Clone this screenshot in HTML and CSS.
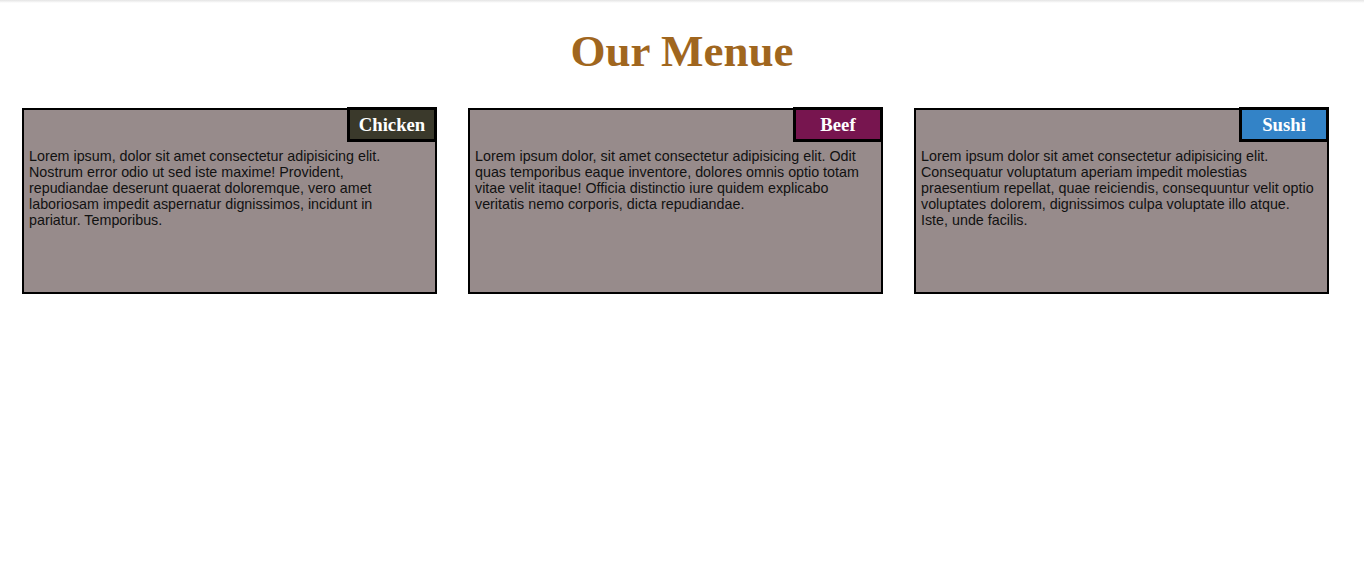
FILE: index.html
```html
<!DOCTYPE html>
<html lang="en">
<head>
<meta charset="utf-8">
<title>Our Menue</title>
<link rel="stylesheet" href="styles.css">
</head>
<body>
<div class="topbar"></div>
<h1 class="title">Our Menue</h1>
<div class="cards">
  <div class="card">
    <h3 class="badge badge-chicken">Chicken</h3>
    <p class="card-text">Lorem ipsum, dolor sit amet consectetur adipisicing elit. Nostrum error odio ut sed iste maxime! Provident, repudiandae deserunt quaerat doloremque, vero amet laboriosam impedit aspernatur dignissimos, incidunt in pariatur. Temporibus.</p>
  </div>
  <div class="card">
    <h3 class="badge badge-beef">Beef</h3>
    <p class="card-text">Lorem ipsum dolor, sit amet consectetur adipisicing elit. Odit quas temporibus eaque inventore, dolores omnis optio totam vitae velit itaque! Officia distinctio iure quidem explicabo veritatis nemo corporis, dicta repudiandae.</p>
  </div>
  <div class="card">
    <h3 class="badge badge-sushi">Sushi</h3>
    <p class="card-text">Lorem ipsum dolor sit amet consectetur adipisicing elit. Consequatur voluptatum aperiam impedit molestias praesentium repellat, quae reiciendis, consequuntur velit optio voluptates dolorem, dignissimos culpa voluptate illo atque. Iste, unde facilis.</p>
  </div>
</div>
</body>
</html>
```
FILE: styles.css
```css
html, body {
  margin: 0;
  padding: 0;
  background: #ffffff;
}

body {
  font-family: "Liberation Sans", Arial, sans-serif;
}

.topbar {
  height: 3px;
  background: linear-gradient(#e4e4e4, #ffffff);
}

.title {
  margin: 23px 0 32px;
  font-family: "Liberation Serif", "Times New Roman", serif;
  font-weight: bold;
  font-size: 45px;
  line-height: 50px;
  color: #a0661e;
  text-align: center;
}

.cards {
  display: flex;
  gap: 31px;
  padding: 0 22px;
}

.card {
  position: relative;
  flex: 0 0 415px;
  box-sizing: border-box;
  height: 186px;
  border: 2px solid #000;
  background: #978b8b;
  padding: 38px 10px 0 5px;
}

.badge {
  position: absolute;
  top: -3px;
  right: -2px;
  margin: 0;
  width: 84px;
  height: 29px;
  border: 3px solid #000;
  font-family: "Liberation Serif", "Times New Roman", serif;
  font-weight: bold;
  font-size: 18.72px;
  line-height: 29px;
  color: #ffffff;
  text-align: center;
}

.badge-chicken { background: #3a392b; }
.badge-beef { background: #77154f; }
.badge-sushi { background: #3383c7; }

.card-text {
  margin: 0;
  font-size: 14.3px;
  line-height: 16px;
  color: #111;
}
```
